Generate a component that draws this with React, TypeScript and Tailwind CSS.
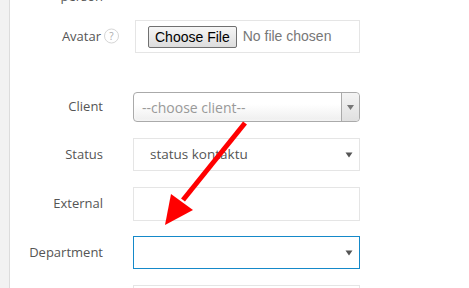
import { ReactNode } from "react";

const labelCls =
  "w-[93px] shrink-0 text-right text-[13px] text-[#555] font-['Open_Sans',sans-serif]";

function Row({
  label,
  className,
  children,
}: {
  label?: ReactNode;
  className?: string;
  children: ReactNode;
}) {
  return (
    <div className={`flex shrink-0 items-center ${className ?? ""}`}>
      <div className={labelCls}>{label}</div>
      <div className="ml-[30px] w-[227px] h-full">{children}</div>
    </div>
  );
}

function Caret({ className }: { className?: string }) {
  return (
    <svg width="8" height="6" viewBox="0 0 8 6" className={className}>
      <path d="M0.5 0.5 L7.5 0.5 L4 5.5 Z" fill="#555" />
    </svg>
  );
}

export default function App() {
  return (
    <div className="relative h-screen flex bg-white overflow-hidden font-['Open_Sans',sans-serif]">
      {/* left rail */}
      <div className="w-[10px] shrink-0 bg-[#f2f2f2] border-r border-[#dcdcdc]" />

      <div className="flex flex-col">
        {/* tail of a two-line label above */}
        <div className="h-[20px] shrink-0">
          <div className={`${labelCls} -mt-[13px] leading-[18px]`}>person</div>
        </div>

        {/* Avatar */}
        <Row
          className="h-[33px]"
          label={
            <span className="relative pr-[2px]">
              Avatar
              <span className="absolute left-[calc(100%+1px)] top-1/2 -translate-y-1/2 w-[15px] h-[15px] rounded-full border border-[#d6d6d6] text-[10px] leading-[13px] text-center text-[#aaa]">
                ?
              </span>
            </span>
          }
        >
          <div className="ml-[2px] h-full border border-[#e5e5e5] flex items-center pl-[12px] font-['Liberation_Sans',Arial,sans-serif]">
            <button className="h-[22px] px-[6px] border border-[#707070] rounded-[2px] bg-gradient-to-b from-[#f6f6f6] to-[#dddddd] text-[14px] text-black leading-none">
              Choose File
            </button>
            <span className="ml-[6px] text-[14px] text-[#777]">No file chosen</span>
          </div>
        </Row>

        {/* Client */}
        <Row className="mt-[39px] h-[30px]" label="Client">
          <div className="h-full flex rounded-[4px] border border-[#aaa] bg-gradient-to-b from-white from-40% to-[#eeeeee] shadow-[inset_0_0_3px_#fff]">
            <div className="flex-1 flex items-center pl-[8px] text-[14px] text-[#999]">
              --choose client--
            </div>
            <div className="w-[18px] border-l border-[#aaa] rounded-r-[4px] bg-gradient-to-b from-[#f4f4f4] to-[#e0e0e0] flex items-center justify-center">
              <svg width="7" height="5" viewBox="0 0 7 5">
                <path d="M0 0 L7 0 L3.5 5 Z" fill="#777" />
              </svg>
            </div>
          </div>
        </Row>

        {/* Status */}
        <Row className="mt-[16px] h-[33px]" label="Status">
          <div className="h-full border border-[#e5e5e5] flex items-center pl-[16px] pr-[6px] text-[13.5px] text-[#555]">
            <span className="flex-1">status kontaktu</span>
            <Caret />
          </div>
        </Row>

        {/* External */}
        <Row className="mt-[16px] h-[34px]" label="External">
          <div className="h-full border border-[#e5e5e5]" />
        </Row>

        {/* Department */}
        <Row className="mt-[15px] h-[33px]" label="Department">
          <div className="h-full border border-[#1589c9] flex items-center justify-end pr-[6px]">
            <Caret />
          </div>
        </Row>

        <Row className="mt-[16px] h-[33px]">
          <div className="h-full border border-[#e5e5e5]" />
        </Row>
      </div>

      {/* annotation arrow */}
      <svg
        className="absolute inset-0 pointer-events-none"
        width="469"
        height="288"
        viewBox="0 0 469 288"
      >
        <line x1="245" y1="123" x2="183" y2="200" stroke="#ff0000" strokeWidth="5" />
        <polygon points="165,225 171,194 193,210" fill="#ff0000" />
      </svg>
    </div>
  );
}
